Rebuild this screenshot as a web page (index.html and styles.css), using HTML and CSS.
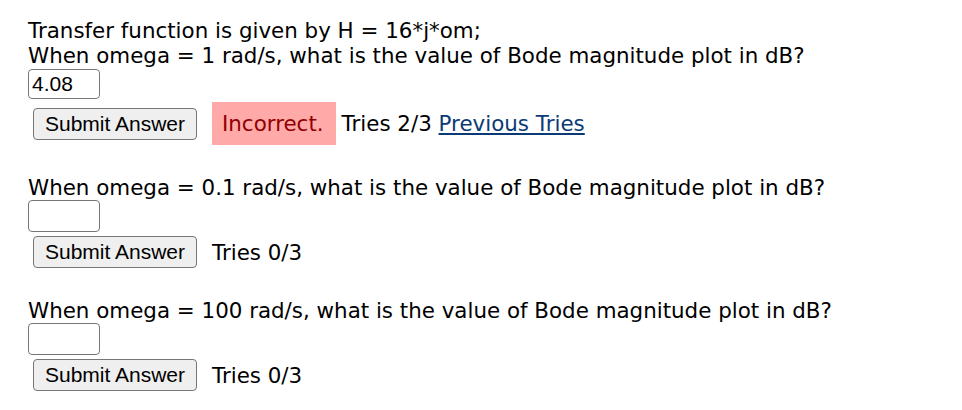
FILE: index.html
```html
<!DOCTYPE html>
<html lang="en">
<head>
    <meta charset="UTF-8">
    <meta name="viewport" content="width=device-width, initial-scale=1.0">
    <title>Bode magnitude</title>
    <link rel="stylesheet" href="styles.css">
</head>
<body>
    <div class="problem">
        <div class="question">
            <p class="prompt">Transfer function is given by H = 16*j*om;<br>When omega = 1 rad/s, what is the value of Bode magnitude plot in dB?</p>
            <input type="text" class="answer filled" value="4.08">
            <div class="actions">
                <button type="button" class="submit-btn">Submit Answer</button>
                <span class="status incorrect">Incorrect.</span>
                <span class="tries">Tries 2/3 <a href="#" class="prev-link">Previous Tries</a></span>
            </div>
        </div>

        <div class="question">
            <p class="prompt">When omega = 0.1 rad/s, what is the value of Bode magnitude plot in dB?</p>
            <input type="text" class="answer">
            <div class="actions">
                <button type="button" class="submit-btn">Submit Answer</button>
                <span class="tries">Tries 0/3</span>
            </div>
        </div>

        <div class="question">
            <p class="prompt">When omega = 100 rad/s, what is the value of Bode magnitude plot in dB?</p>
            <input type="text" class="answer">
            <div class="actions">
                <button type="button" class="submit-btn">Submit Answer</button>
                <span class="tries">Tries 0/3</span>
            </div>
        </div>
    </div>
</body>
</html>
```

FILE: styles.css
```css
* {
    margin: 0;
    padding: 0;
    box-sizing: border-box;
}

body {
    background: #fff;
    color: #000;
    font-family: "DejaVu Sans", Verdana, sans-serif;
    font-size: 21.4px;
    padding: 18px 28px 0;
}

.question {
    margin-bottom: 30px;
}

.question:last-child {
    margin-bottom: 0;
}

.prompt {
    line-height: 25px;
}

.answer {
    display: block;
    width: 72px;
    height: 32px;
    border: 1.5px solid #767676;
    border-radius: 4px;
    padding: 0 3px;
    font-family: "Liberation Sans", Arial, sans-serif;
    font-size: 21px;
    color: #000;
}

.answer.filled {
    height: 30px;
    margin-top: 1px;
}

.actions {
    display: flex;
    align-items: center;
    margin-top: 4px;
    margin-left: 5px;
}

.question:first-child .actions {
    margin-top: 3px;
}

.submit-btn {
    width: 164px;
    height: 32px;
    background: #efefef;
    border: 1.5px solid #767676;
    border-radius: 4px;
    font-family: "Liberation Sans", Arial, sans-serif;
    font-size: 21px;
    color: #000;
    margin-right: 15px;
}

.status {
    padding: 9px 12px 9px 10px;
    margin-right: 6px;
}

.incorrect {
    background: #ffa9a9;
    color: #8f0000;
}

.prev-link {
    color: #0b3a75;
}
```
